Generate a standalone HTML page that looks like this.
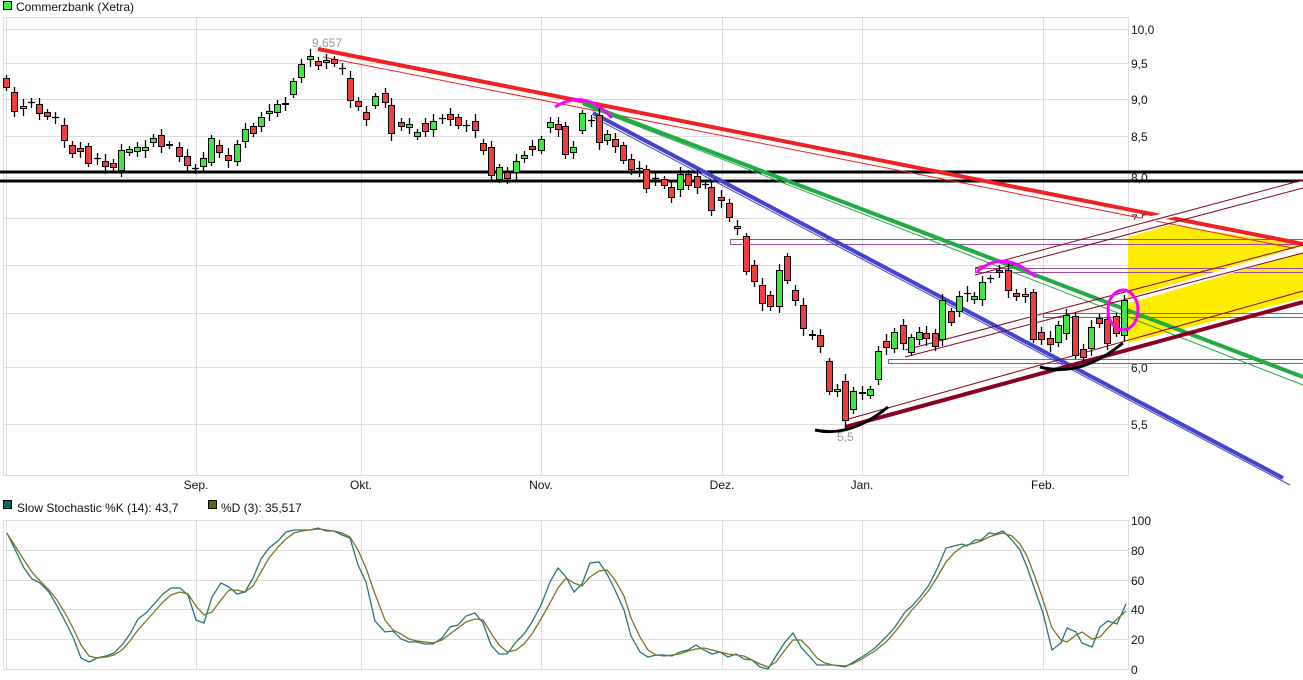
<!DOCTYPE html>
<html><head><meta charset="utf-8"><style>
html,body{margin:0;padding:0;background:#fff;width:1303px;height:680px;overflow:hidden}
svg{display:block;font-family:"Liberation Sans",sans-serif}
</style></head><body>
<svg width="1303" height="680" viewBox="0 0 1303 680">
<rect x="3.5" y="1.5" width="8" height="8" fill="#44ee44" stroke="#000"/>
<text x="16" y="11" font-size="12" fill="#111">Commerzbank (Xetra)</text>
<g stroke="#dcdcdc" stroke-width="1" fill="none">
<rect x="3.5" y="17.5" width="1125" height="458"/>
<path d="M3 29.5H1128M3 63.5H1128M3 99.5H1128M3 136.5H1128M3 177.5H1128M3 218.5H1128M3 265.5H1128M3 313.5H1128M3 367.5H1128M3 424.5H1128"/>
<path d="M196.5 17V476M361.5 17V476M541.5 17V476M722.5 17V476M862.5 17V476M1043.5 17V476M6.5 17V476"/>
</g>
<g font-size="12" fill="#111">
<text x="1131" y="34">10,0</text><text x="1131" y="68">9,5</text><text x="1131" y="104">9,0</text><text x="1131" y="141">8,5</text><text x="1131" y="182">8,0</text><text x="1131" y="223">7,5</text><text x="1131" y="270">7,0</text><text x="1131" y="318">6,5</text><text x="1131" y="372">6,0</text><text x="1131" y="429">5,5</text>
<text x="196" y="489" text-anchor="middle">Sep.</text><text x="361" y="489" text-anchor="middle">Okt.</text><text x="541" y="489" text-anchor="middle">Nov.</text><text x="722" y="489" text-anchor="middle">Dez.</text><text x="862" y="489" text-anchor="middle">Jan.</text><text x="1043" y="489" text-anchor="middle">Feb.</text>
</g>
<polygon points="1128,237 1170,225 1303,245 1303,298 1128,343" fill="#ffee00"/>
<g fill="none" stroke="#9b4c9b" stroke-width="1">
<rect x="730.5" y="239.5" width="580" height="5"/>
<rect x="975.5" y="268.5" width="340" height="4"/>
<rect x="1043.5" y="313.5" width="270" height="4"/>
<rect x="888.5" y="359.5" width="420" height="4"/>
</g>
<path d="M0 172H1303M0 181H1303" stroke="#000" stroke-width="3"/>
<path d="M318 49L1303 244" stroke="#ee2222" stroke-width="4"/>
<path d="M323 57L1303 250" stroke="#ee2222" stroke-width="1"/>
<path d="M583 103L1303 377" stroke="#22aa44" stroke-width="4"/>
<path d="M583 105L1303 385" stroke="#22aa44" stroke-width="1"/>
<path d="M593 113L1283 478" stroke="#4444cc" stroke-width="4"/>
<path d="M593 117L1290 485" stroke="#4444cc" stroke-width="1"/>
<g stroke="#fff" fill="none" stroke-width="6">
<path d="M1128 224.5L1303 184M1128 300.5L1303 249"/>
</g>
<g stroke="#880022" fill="none">
<path d="M975 268L1303 180M975 275L1303 188" stroke-width="1"/>
<path d="M905 350L1303 245M905 357L1303 253" stroke-width="1"/>
<path d="M845 420L1303 291" stroke-width="1"/>
<path d="M845 427L1303 302" stroke-width="4"/>
</g>
<g id="c" stroke="#000" stroke-width="1"></g>
<g stroke="#000" stroke-width="1.3">
<path id="wk" d=""/>
</g>
<g fill="none" stroke-width="3">
<path d="M555 107Q585 88 612 118" stroke="#ff00ff"/>
<path d="M977 272Q1003 248 1036 277" stroke="#ff00ff"/>
<ellipse cx="1123" cy="310" rx="15" ry="20" stroke="#ff00ff"/>
<path d="M815 430Q850 438 888 407" stroke="#000"/>
<path d="M1040 367Q1080 378 1123 343" stroke="#000"/>
</g>
<text x="312" y="47" font-size="12" fill="#999">9,657</text>
<text x="837" y="441" font-size="12" fill="#999">5,5</text>
<rect x="3.5" y="500.5" width="8" height="8" fill="#0e6666" stroke="#000"/>
<text x="17" y="512" font-size="12" fill="#111">Slow Stochastic %K (14): 43,7</text>
<rect x="208.5" y="500.5" width="8" height="8" fill="#666600" stroke="#000"/>
<text x="221" y="512" font-size="12" fill="#111">%D (3): 35,517</text>
<g stroke="#dcdcdc" fill="none">
<rect x="3.5" y="520.5" width="1125" height="149"/>
<path d="M3 550.5H1128M3 580.5H1128M3 609.5H1128M3 639.5H1128"/>
<path d="M196.5 520V670M361.5 520V670M541.5 520V670M722.5 520V670M862.5 520V670M1043.5 520V670M6.5 520V670"/>
</g>
<g font-size="12" fill="#111">
<text x="1131" y="525">100</text><text x="1131" y="555">80</text><text x="1131" y="585">60</text><text x="1131" y="614">40</text><text x="1131" y="644">20</text><text x="1131" y="674">0</text>
</g>
<polyline fill="none" stroke="#227777" stroke-width="1.3" points="7,533 24,568 32,579 40,583 49,592 57,606 65,621 73,637 81,658 89,662 97,658 106,656 114,653 122,645 130,634 138,619 146,613 155,603 163,594 171,588 180,588 188,595 196,620 204,623 212,597 221,583 229,587 237,594 245,592 253,578 261,559 269,548 278,541 286,532 294,530 302,530 310,530 318,528 326,531 334,531 342,535 350,538 358,565 366,582 375,621 385,632 393,631 401,639 409,642 417,642 425,644 433,644 442,638 450,627 458,625 466,616 475,613 483,623 491,645 499,654 507,654 516,642 524,634 532,622 541,605 550,582 558,568 566,577 574,592 582,584 590,563 599,562 607,574 615,590 624,610 631,636 640,652 648,657 656,655 664,655 672,656 680,652 688,650 696,645 704,650 712,654 720,652 728,657 736,654 744,659 752,660 760,667 768,669 776,656 785,642 793,633 801,647 809,656 817,665 825,665 833,665 845,667 852,663 860,658 865,655 875,648 887,636 895,627 905,612 912,606 920,597 929,585 938,567 946,548 954,546 962,544 967,546 975,540 981,540 989,533 995,534 1003,531 1012,540 1020,550 1027,567 1035,590 1043,613 1052,650 1061,643 1067,628 1076,632 1082,643 1092,647 1100,627 1108,621 1117,624 1126,604"/>
<polyline fill="none" stroke="#777722" stroke-width="1.3" transform="translate(8,0)" points="0,535 16,560 24,572 32,581 41,590 49,600 57,613 65,628 73,645 81,656 89,658 98,657 106,655 114,650 122,641 130,630 138,621 147,611 155,602 163,595 172,592 180,594 188,606 196,615 204,612 213,600 221,590 229,590 237,592 245,586 253,572 261,558 270,547 278,539 286,533 294,531 302,530 310,529 318,530 326,531 334,533 342,537 350,550 358,568 367,594 377,620 385,630 393,634 401,639 409,641 417,642 425,643 434,640 442,634 450,628 458,622 467,619 475,620 483,633 491,645 499,652 508,650 516,644 524,634 533,619 542,603 550,588 558,578 566,583 574,586 582,577 591,571 599,570 607,580 616,596 623,618 632,637 640,650 648,655 656,656 664,655 672,654 680,651 688,649 696,648 704,650 712,652 720,654 728,655 736,656 744,660 752,664 760,667 768,662 777,650 785,640 793,640 801,648 809,658 817,663 825,665 837,666 844,664 852,660 857,657 867,651 879,641 887,632 897,619 904,610 912,601 921,590 930,576 938,562 946,553 954,547 959,545 967,543 973,541 981,537 987,535 995,533 1004,536 1012,544 1019,556 1027,577 1035,600 1044,628 1053,640 1059,642 1068,635 1074,632 1084,639 1092,637 1100,628 1109,619 1118,611"/>
</svg>
<script>
(function(){
var d="6,78,87,r;14,92,111,r;23,106,108,g;31,102,103,x;39,104,113,r;47,112,116,r;55,117,118,x;64,125,140,r;72,145,153,r;80,148,151,r;88,146,163,r;97,158,159,x;105,161,166,r;113,163,167,r;121,150,170,g;129,149,152,g;137,147,151,g;145,147,150,g;153,138,142,g;161,135,146,r;169,144,145,g;179,147,156,r;187,156,165,r;195,168,169,x;203,158,166,g;211,138,162,g;219,145,152,r;228,155,160,r;237,144,161,g;245,129,141,g;253,126,133,r;261,117,126,g;269,111,113,g;277,104,112,g;285,103,104,g;293,81,94,g;301,64,77,g;310,56,59,g;318,61,65,r;326,60,62,g;334,59,63,r;342,68,69,x;350,78,100,r;358,101,106,r;366,112,119,r;375,96,105,g;385,93,102,r;391,105,133,r;401,122,126,r;409,124,127,g;417,132,136,g;425,123,131,r;433,121,129,g;442,118,119,x;450,114,119,r;458,117,125,r;466,125,126,x;475,121,130,r;483,143,150,r;491,147,175,r;499,167,179,g;507,172,178,r;516,161,172,g;524,155,158,g;532,146,149,r;541,139,150,g;550,122,127,g;558,124,129,r;565,126,154,r;573,147,152,g;582,113,130,g;591,120,121,x;599,115,142,r;607,134,140,g;615,139,146,r;623,145,160,r;631,159,169,r;639,168,169,x;646,169,188,r;655,178,179,x;664,179,185,r;671,187,197,r;680,174,189,g;688,174,185,r;697,176,187,r;705,184,185,x;711,187,210,r;721,197,200,r;729,203,217,r;737,226,228,g;746,236,271,r;754,265,281,r;762,285,303,r;770,295,306,r;779,270,306,g;787,256,280,r;795,290,300,r;803,305,328,r;812,334,335,r;820,335,346,r;829,361,391,r;837,389,391,g;845,381,420,r;853,391,409,g;862,392,393,r;870,389,395,g;878,351,379,g;886,341,347,r;894,332,348,g;903,325,343,r;911,337,352,g;919,332,339,g;926,333,338,r;935,333,346,r;942,300,339,g;951,311,322,r;959,296,311,g;967,293,294,x;974,296,299,g;982,282,299,g;990,278,279,x;999,270,272,r;1008,270,290,r;1016,293,296,r;1025,294,296,g;1033,292,339,r;1041,332,339,r;1050,338,344,r;1058,325,342,g;1066,315,333,g;1075,316,355,r;1083,349,357,r;1091,327,348,g;1099,318,323,r;1107,319,343,r;1116,316,333,r;1124,300,335,g";
var ns="http://www.w3.org/2000/svg",g=document.getElementById("c"),w="";
d.split(";").forEach(function(s,i){var a=s.split(","),x=+a[0],t=+a[1],b=+a[2],c=a[3];
var e=((i*7)%5)+3;w+="M"+(x+0.5)+" "+(t-e)+"V"+(b+e+1);
if(c==="x"){w+="M"+(x-3)+" "+(t+0.5)+"H"+(x+4);return;}
var r=document.createElementNS(ns,"rect");r.setAttribute("x",x-2.5);r.setAttribute("y",t+0.5);r.setAttribute("width",6);r.setAttribute("height",Math.max(1,b-t));r.setAttribute("fill",c==="r"?"#ee3e3e":"#3ee83e");g.appendChild(r);});
var p=document.getElementById("wk");p.setAttribute("d",w);g.parentNode.insertBefore(p.parentNode,g);
})();
</script>
</body></html>
